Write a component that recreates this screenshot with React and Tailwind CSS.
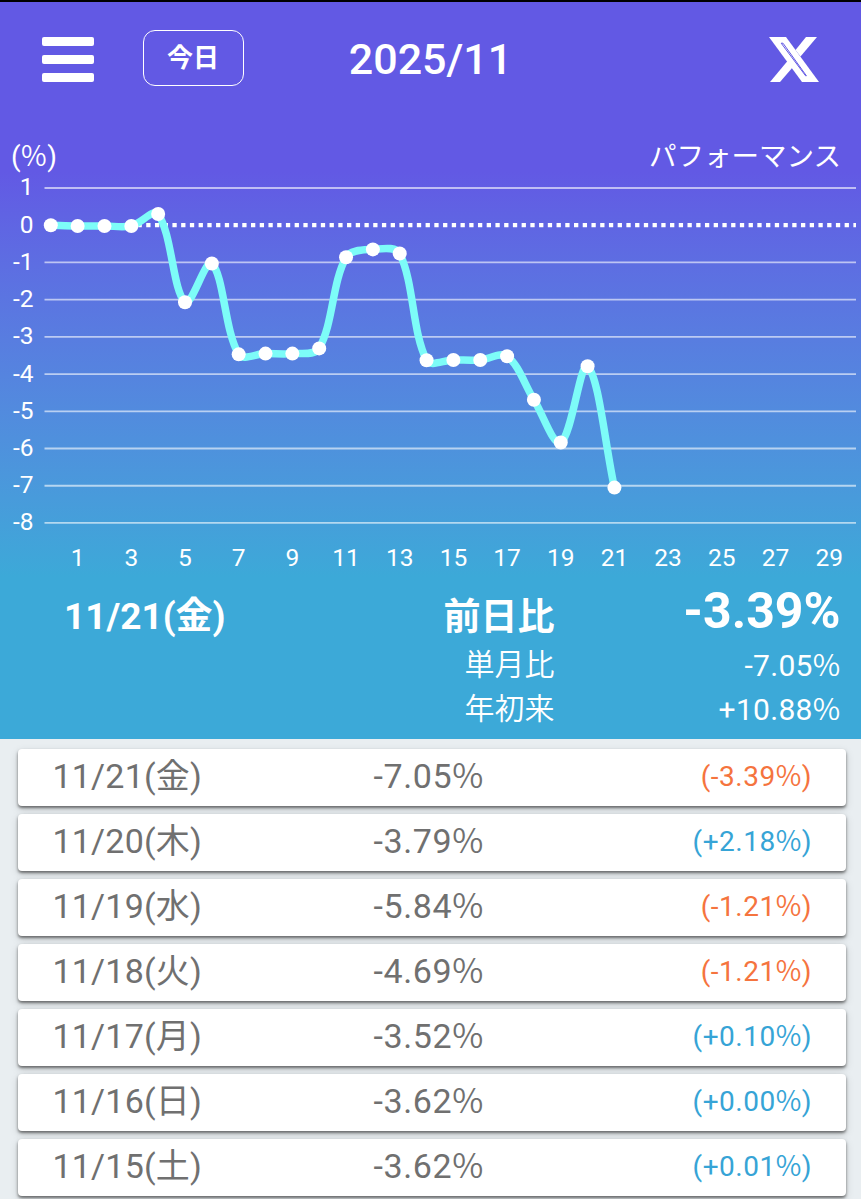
import React from 'react'

const DAILY = [
  0, -0.02, -0.02, -0.02, 0.3, -2.07, -1.03, -3.47, -3.45, -3.45, -3.31,
  -0.86, -0.65, -0.76, -3.63, -3.62, -3.62, -3.52, -4.69, -5.84, -3.79, -7.05,
]

const ROWS = [
  { date: '11/21(金)', total: '-7.05', diff: '-3.39' },
  { date: '11/20(木)', total: '-3.79', diff: '+2.18' },
  { date: '11/19(水)', total: '-5.84', diff: '-1.21' },
  { date: '11/18(火)', total: '-4.69', diff: '-1.21' },
  { date: '11/17(月)', total: '-3.52', diff: '+0.10' },
  { date: '11/16(日)', total: '-3.62', diff: '+0.00' },
  { date: '11/15(土)', total: '-3.62', diff: '+0.01' },
]

const Y_TICKS = [1, 0, -1, -2, -3, -4, -5, -6, -7, -8]
const X_TICKS = [1, 3, 5, 7, 9, 11, 13, 15, 17, 19, 21, 23, 25, 27, 29]

const TENSION = 0.34
const xAt = (day) => 50.8 + day * 26.84
const yAt = (value) => 55.2 - value * 37.22

// Smooth line through the points, control handles scaled by neighbour distance
function splinePath(points) {
  const handles = points.map((p, i) => {
    const prev = points[i - 1] || p
    const next = points[i + 1] || p
    const d01 = Math.hypot(p.x - prev.x, p.y - prev.y)
    const d12 = Math.hypot(next.x - p.x, next.y - p.y)
    const a = (TENSION * d01) / (d01 + d12)
    const b = (TENSION * d12) / (d01 + d12)
    const dx = next.x - prev.x
    const dy = next.y - prev.y
    return { inX: p.x - a * dx, inY: p.y - a * dy, outX: p.x + b * dx, outY: p.y + b * dy }
  })
  return points.reduce((d, p, i) => {
    if (i === 0) return `M${p.x} ${p.y}`
    const from = handles[i - 1]
    const to = handles[i]
    return `${d} C${from.outX} ${from.outY} ${to.inX} ${to.inY} ${p.x} ${p.y}`
  }, '')
}

function Percent() {
  return <span className="font-['Noto_Sans_CJK_JP',sans-serif] font-[350]">%</span>
}

function XLogo() {
  return (
    <svg width="50" height="45" viewBox="0 0 50 45" fill="none">
      <path d="M0 0H17L50 45H33Z" fill="white" />
      <path d="M37 0H48L31.5 19.5L26.5 13Z" fill="white" />
      <path d="M1 45H11L23.5 30.5L18.5 24Z" fill="white" />
      <path d="M12.2 6.2H14L37.4 38.8H36.6Z" stroke="#6259e4" strokeWidth="1" />
    </svg>
  )
}

function Header() {
  return (
    <header className="grid h-[112px] grid-cols-3 items-center text-white">
      <div className="flex items-center pl-[42px]">
        <button className="flex w-[52px] flex-col gap-[9px] pt-[3px]" aria-label="menu">
          <span className="h-[9px] w-full rounded-[2px] bg-white" />
          <span className="h-[9px] w-full rounded-[2px] bg-white" />
          <span className="h-[9px] w-full rounded-[2px] bg-white" />
        </button>
        <button className="ml-[49px] flex h-14 w-[101px] shrink-0 items-center justify-center rounded-xl border-[1.5px] border-white pr-px text-[26px] leading-none font-bold">
          今日
        </button>
      </div>
      <h1 className="pt-0.5 text-center text-[43px] leading-none font-medium">2025/11</h1>
      <div className="flex justify-end pt-0.5 pr-[42px]">
        <XLogo />
      </div>
    </header>
  )
}

function PerformanceChart() {
  const points = DAILY.map((value, day) => ({ x: xAt(day), y: yAt(value) }))
  return (
    <svg className="block" width="861" height="410" viewBox="0 0 861 410" fill="none">
      {Y_TICKS.map((tick) => (
        <g key={tick}>
          {tick !== 0 && (
            <line x1="44.5" x2="856" y1={yAt(tick)} y2={yAt(tick)} stroke="white" strokeOpacity="0.6" strokeWidth="1.8" />
          )}
          <text x="33.5" y={yAt(tick) + 7.5} textAnchor="end" fontSize="24.5" fill="white">{tick}</text>
        </g>
      ))}
      <line x1="50.2" x2="856" y1={yAt(0)} y2={yAt(0)} stroke="white" strokeWidth="4.2" strokeDasharray="4.3 4.43" />
      {X_TICKS.map((tick) => (
        <text key={tick} x={xAt(tick)} y="396" textAnchor="middle" fontSize="24.5" fill="white">{tick}</text>
      ))}
      <path d={splinePath(points)} stroke="#7dfcf8" strokeWidth="7.5" strokeLinejoin="round" />
      {points.map((p) => (
        <circle key={p.x} cx={p.x} cy={p.y} r="7" fill="white" />
      ))}
    </svg>
  )
}

function Summary() {
  return (
    <section className="grid h-[159px] grid-cols-[300px_254.5px_286px] grid-rows-[62px_45px_43px] items-center text-white">
      <div className="pt-[11px] pl-[64px] text-[37px] leading-none font-bold">11/21(金)</div>
      <div className="pt-3 text-right text-[37px] leading-none font-bold">前日比</div>
      <div className="text-right text-[50px] leading-none font-bold">-3.39%</div>
      <div className="col-start-2 text-right text-[30px] leading-none font-[350]">単月比</div>
      <div className="text-right text-[30px] leading-none tracking-[0.3px]">-7.05<Percent /></div>
      <div className="col-start-2 text-right text-[30px] leading-none font-[350]">年初来</div>
      <div className="text-right text-[30px] leading-none tracking-[0.3px]">+10.88<Percent /></div>
    </section>
  )
}

function DayRow({ date, total, diff }) {
  const color = diff.startsWith('-') ? 'text-[#f5743e]' : 'text-[#36a4d6]'
  return (
    <li className="grid h-[57px] shrink-0 grid-cols-[321px_1fr_1fr] items-center rounded-[4px] bg-white pr-[34px] pl-[35px] text-[#707070] shadow-[0_2px_3px_rgba(0,0,0,0.5),0_3px_8px_rgba(0,0,0,0.15)]">
      <span className="pb-[3px] text-[34px] leading-none tracking-[0.2px]">{date}</span>
      <span className="pb-[5px] text-[34px] leading-none tracking-[0.6px]">{total}<Percent /></span>
      <span className={`pb-1 text-right text-[28px] leading-none tracking-[0.5px] ${color}`}>({diff}<Percent />)</span>
    </li>
  )
}

export default function App() {
  return (
    <div className="h-[1199px] w-[861px] overflow-hidden bg-[#e9eef1] font-[Roboto,'Noto_Sans_CJK_JP',sans-serif]" lang="ja">
      <div className="h-[739px] border-t-2 border-black bg-linear-to-b from-[#6259e4] from-[170px] to-[#3ca9d8] to-[575px]">
        <Header />
        <div className="flex h-14 items-end justify-between pr-5 pl-[11px] text-[27.5px] leading-[27px] text-white">
          <span className="text-[28px] tracking-[0.5px]">(<Percent />)</span>
          <span>パフォーマンス</span>
        </div>
        <PerformanceChart />
        <Summary />
      </div>
      <ul className="flex flex-col gap-2 pt-[10px] pr-[15px] pl-[17.5px]">
        {ROWS.map((row) => (
          <DayRow key={row.date} {...row} />
        ))}
      </ul>
    </div>
  )
}
